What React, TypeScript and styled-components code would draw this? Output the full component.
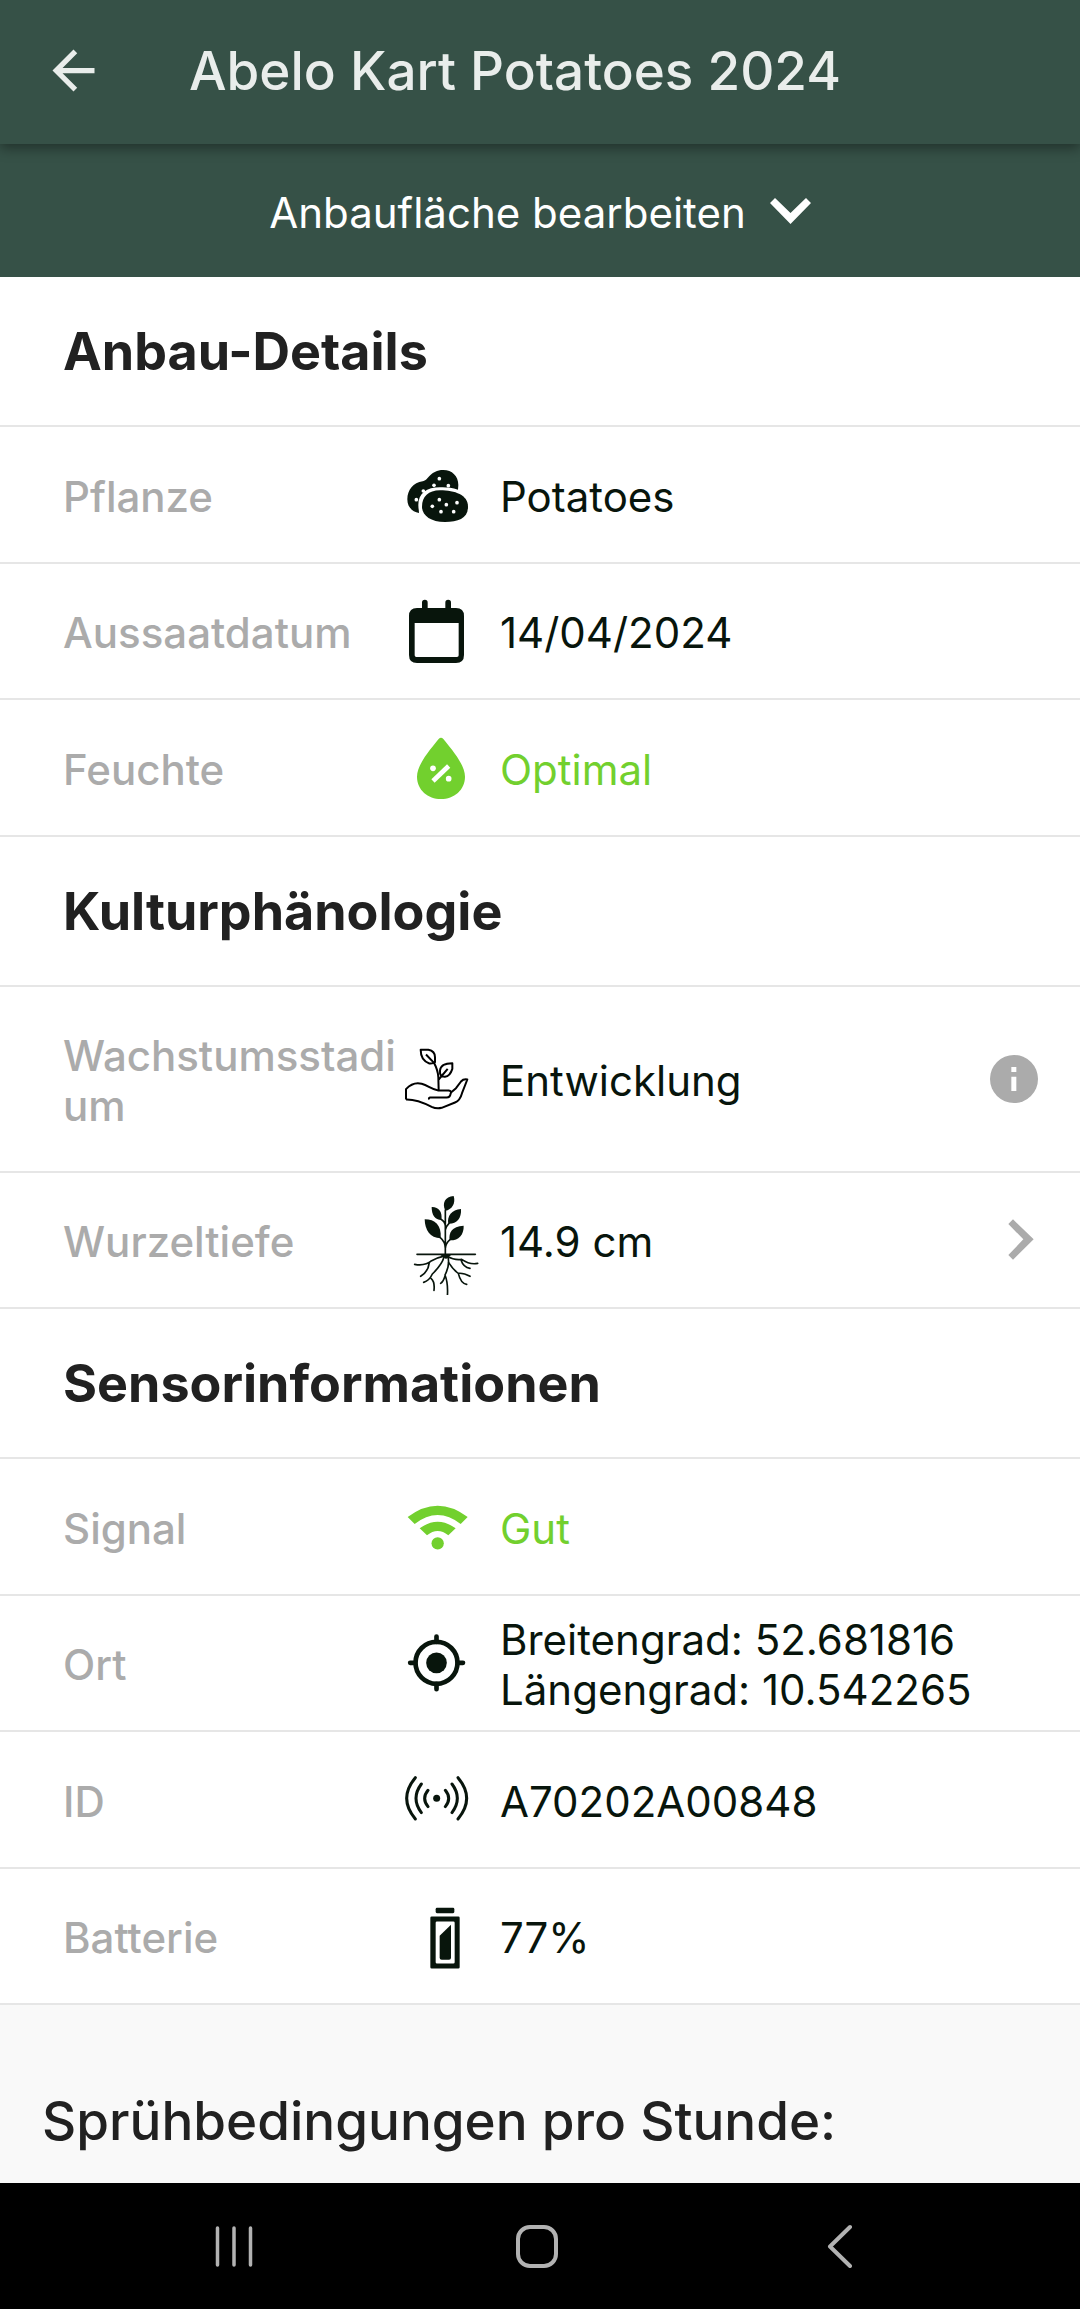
import React from "react";
import styled, { createGlobalStyle } from "styled-components";

const colors = {
  forest: "#365147",
  ink: "#08150c",
  heading: "#212121",
  muted: "#ababab",
  line: "#e6e6e6",
  good: "#72d02e",
};

const GlobalStyle = createGlobalStyle`
  * { box-sizing: border-box; }
  body {
    margin: 0;
    background: #fafafa;
    font-family: Inter, "Liberation Sans", sans-serif;
  }
  button {
    font: inherit;
    color: inherit;
    background: none;
    border: 0;
    padding: 0;
    cursor: pointer;
  }
  svg { display: block; flex: none; }
`;

const Page = styled.div`
  display: flex;
  flex-direction: column;
  min-height: 100vh;
`;

const AppBar = styled.header`
  display: flex;
  align-items: center;
  gap: 84px;
  height: 144px;
  padding: 0 42px 3px;
  background: ${colors.forest};
  color: #e9edeb;
  box-shadow: 0 4px 12px rgba(0, 0, 0, 0.4);
  z-index: 1;
`;

const Title = styled.h1`
  margin: 0;
  font-size: 53px;
  line-height: 64px;
  font-weight: 500;
`;

const EditBar = styled.button`
  && {
    display: flex;
    align-items: center;
    justify-content: center;
    gap: 24px;
    height: 133px;
    padding-top: 4px;
    background: ${colors.forest};
    color: #ffffff;
    font-size: 42px;
    line-height: 50px;
  }
`;

const Details = styled.main`
  background: #ffffff;
`;

const SectionTitle = styled.h2`
  display: flex;
  align-items: center;
  height: 150px;
  margin: 0;
  padding: 2px 63px 0;
  border-bottom: 2px solid ${colors.line};
  color: ${colors.heading};
  font-size: 52px;
  line-height: 64px;
  font-weight: 700;
`;

const List = styled.dl`
  margin: 0;
`;

const Row = styled.div<{ $tall?: boolean }>`
  display: grid;
  grid-template-columns: 339px 98px 1fr auto;
  align-items: center;
  min-height: ${(p) => (p.$tall ? 186 : 137)}px;
  padding: 4px 42px 0 63px;
  border-bottom: 2px solid ${colors.line};
  font-size: 42px;
  line-height: 50px;

  &:nth-child(even) {
    min-height: 136px;
  }
`;

const Label = styled.dt`
  color: ${colors.muted};
  font-weight: 500;
  word-break: break-all;
`;

const Value = styled.dd<{ $good?: boolean }>`
  margin: 0;
  color: ${(p) => (p.$good ? colors.good : colors.ink)};
`;

const Line = styled.span`
  display: block;
`;

const RowAction = styled.button`
  && {
    color: ${colors.muted};
  }
`;

const Spray = styled.section`
  flex: 1;
  padding: 84px 42px 30px;
  background: #f9f9f9;
`;

const SprayTitle = styled.h2`
  margin: 0;
  color: ${colors.heading};
  font-size: 53px;
  line-height: 64px;
  font-weight: 500;
`;

const SystemNav = styled.nav`
  display: grid;
  grid-template-columns: repeat(3, 1fr);
  height: 126px;
  padding: 0 88px 0 82px;
  background: #000000;
  color: #b2b2b2;
`;

const NavButton = styled.button`
  && {
    display: flex;
    align-items: center;
    justify-content: center;
  }
`;

function Glyph({ top, color = colors.ink, children }: { top: number; color?: string; children: React.ReactNode }) {
  return (
    <svg width="78" height="105" viewBox={`66 ${top} 234 315`} fill={color} aria-hidden="true">
      {children}
    </svg>
  );
}

const potatoDots = [
  [178, 116], [162, 136], [205, 137], [130, 153], [109, 179],
  [178, 179], [157, 199], [199, 194], [231, 188], [183, 215], [221, 215],
];

const PotatoIcon = () => (
  <Glyph top={12}>
    <path d="M117 219C95 215 82 200 82 178C82 150 100 128 128 124C146 121 150 90 190 90C216 90 235 108 235 135L234 149C215 143 197 141 180 142C140 142 115 160 115 195C115 205 117 212 117 219Z" />
    <path d="M180 151C225 151 264 165 264 200C264 235 235 246 195 246C150 246 126 225 126 200C126 170 145 151 180 151Z" />
    {potatoDots.map(([x, y]) => (
      <circle key={`${x}-${y}`} cx={x} cy={y} r="5.5" fill="#ffffff" />
    ))}
  </Glyph>
);

const CalendarIcon = () => (
  <Glyph top={423}>
    <path
      fillRule="evenodd"
      d="M126 504V488a8.500 8.500 0 0 1 17 0V504H196V488a8.500 8.500 0 0 1 17 0V504H228Q252 504 252 528V645Q252 669 228 669H111Q87 669 87 645V528Q87 504 111 504ZM104 549V646Q104 651 109 651H231Q236 651 236 646V549Z"
    />
  </Glyph>
);

const MoistureIcon = () => (
  <Glyph top={831} color={colors.good}>
    <path d="M176 897Q183 890 190 897C210 922 255 972 255 1010C255 1050 222 1077 183 1077C144 1077 111 1050 111 1010C111 972 156 922 176 897Z" />
    <path d="M159 1023L206 978" stroke="#ffffff" strokeWidth="14" />
    <circle cx="159" cy="985" r="8.500" fill="#ffffff" />
    <circle cx="206" cy="1016" r="8.500" fill="#ffffff" />
  </Glyph>
);

const HandPlantIcon = () => (
  <Glyph top={25.5} color="none">
    <g stroke="#000000" strokeWidth="6" strokeLinejoin="round">
      <path d="M78 237V206C95 188 110 186 125 190C145 195 155 207 175 210H206Q216 212 212 219Q210 231 200 231H150Q146 232 147 237" />
      <path d="M212 217L228 203L243 183Q250 175 262 177L246 218Q240 240 225 246L185 262Q170 266 155 259Q110 236 78 237" />
      <path d="M176 209L175 170Q174 150 162 127" />
      <path d="M122 88H145Q165 92 165 110V125Q160 130 148 129Q122 120 122 88ZM138 102L160 125" />
      <path d="M217 128V145Q210 167 195 169Q178 170 180 150Q182 128 217 128ZM203 145L176 177" />
    </g>
  </Glyph>
);

const RootIcon = () => (
  <Glyph top={510}>
    <path d="M221 528C228 550 215 570 196 572C185 550 195 530 221 528Z" />
    <path d="M155 561C175 560 188 575 184 600C165 600 155 585 155 561Z" />
    <path d="M243 567C245 595 230 612 205 611C200 590 215 568 243 567Z" />
    <path d="M134 598C165 598 185 615 182 655C150 655 135 630 134 598Z" />
    <path d="M251 617C252 645 235 662 209 661C205 640 215 618 251 617Z" />
    <g fill="none" stroke={colors.ink} strokeWidth="5" strokeLinecap="round">
      <path d="M196 570V706M183 598Q195 605 196 618M207 610Q197 620 196 630M180 652Q196 665 196 685M210 659Q197 670 196 685" />
      <path d="M111 703H286" />
      <path d="M197 707Q175 712 155 722Q135 739 104 733M148 727Q145 755 122 769" />
      <path d="M192 712Q185 735 157 762Q148 782 131 787M153 775Q165 785 162 811" />
      <path d="M204 712Q210 735 195 765Q205 790 202 830M195 768Q190 785 182 790" />
      <path d="M206 728Q220 750 235 760Q242 790 260 793M235 760Q250 758 270 769" />
      <path d="M200 708Q225 722 245 718Q270 735 293 730M243 720Q250 742 270 745" />
      <path d="M188 707H207L198 714Z" fill={colors.ink} />
    </g>
  </Glyph>
);

const WifiIcon = () => (
  <Glyph top={-12} color={colors.good}>
    <path d="M83 111Q173 43 263 111L242 132Q173 78 104 132Z" />
    <path d="M119 145Q173 105 227 145L205 166Q173 140 141 166Z" />
    <circle cx="173" cy="190" r="18.500" />
  </Glyph>
);

const LocationIcon = () => (
  <Glyph top={397.5}>
    <circle cx="169.500" cy="547" r="31" />
    <g fill="none" stroke={colors.ink} strokeWidth="14" strokeLinecap="round">
      <circle cx="169.500" cy="547" r="63" />
      <path d="M169.500 468V484M169.500 610V626M90.500 547H106M233 547H249" />
    </g>
  </Glyph>
);

const SensorIcon = () => (
  <Glyph top={27}>
    <circle cx="170" cy="175" r="10.500" />
    <path
      d="M106 113Q54 175 106 237M124 132Q92 175 124 218M144 151Q124 175 144 200M234 113Q286 175 234 237M216 132Q248 175 216 218M196 151Q216 175 196 200"
      fill="none"
      stroke={colors.ink}
      strokeWidth="9"
      strokeLinecap="round"
    />
  </Glyph>
);

const BatteryIcon = () => (
  <Glyph top={436.5}>
    <rect x="167" y="502" width="56" height="16" rx="4" />
    <path
      fillRule="evenodd"
      d="M155 528H235Q239 528 239 532V680Q239 684 235 684H155Q151 684 151 680V532Q151 528 155 528ZM171 543Q167 543 167 547V665Q167 669 171 669H220Q224 669 224 665V547Q224 543 220 543Z"
    />
    <path d="M213 553V652Q213 658 207 658H185Q179 658 179 652V586Z" />
  </Glyph>
);

const InfoIcon = () => (
  <svg width="48" height="52" viewBox="150 105 144 156" fill="currentColor" aria-hidden="true">
    <circle cx="222" cy="177" r="72" />
    <path d="M214 141H229V156H214ZM214 170H229V213H214Z" fill="#ffffff" />
  </svg>
);

const ChevronRightIcon = () => (
  <svg width="48" height="52" viewBox="150 588 144 156" fill="currentColor" aria-hidden="true">
    <path d="M205 612L219 598L281 658L219 719L205 705L250 658Z" />
  </svg>
);

type Item = {
  label: string;
  icon: React.ReactNode;
  lines: string[];
  good?: boolean;
  tall?: boolean;
  action?: { name: string; icon: React.ReactNode };
};

const sections: { title: string; items: Item[] }[] = [
  {
    title: "Anbau-Details",
    items: [
      { label: "Pflanze", icon: <PotatoIcon />, lines: ["Potatoes"] },
      { label: "Aussaatdatum", icon: <CalendarIcon />, lines: ["14/04/2024"] },
      { label: "Feuchte", icon: <MoistureIcon />, lines: ["Optimal"], good: true },
    ],
  },
  {
    title: "Kulturphänologie",
    items: [
      {
        label: "Wachstumsstadium",
        icon: <HandPlantIcon />,
        lines: ["Entwicklung"],
        tall: true,
        action: { name: "Info", icon: <InfoIcon /> },
      },
      {
        label: "Wurzeltiefe",
        icon: <RootIcon />,
        lines: ["14.9 cm"],
        action: { name: "Wurzeltiefe öffnen", icon: <ChevronRightIcon /> },
      },
    ],
  },
  {
    title: "Sensorinformationen",
    items: [
      { label: "Signal", icon: <WifiIcon />, lines: ["Gut"], good: true },
      {
        label: "Ort",
        icon: <LocationIcon />,
        lines: ["Breitengrad: 52.681816", "Längengrad: 10.542265"],
      },
      { label: "ID", icon: <SensorIcon />, lines: ["A70202A00848"] },
      { label: "Batterie", icon: <BatteryIcon />, lines: ["77%"] },
    ],
  },
];

export default function App() {
  return (
    <Page>
      <GlobalStyle />
      <AppBar>
        <button type="button" aria-label="Zurück">
          <svg width="63" height="63" viewBox="0 0 24 24" fill="currentColor" aria-hidden="true">
            <path d="M20 11H7.830l5.590-5.590L12 4l-8 8 8 8 1.410-1.410L7.830 13H20v-2z" />
          </svg>
        </button>
        <Title>Abelo Kart Potatoes 2024</Title>
      </AppBar>
      <EditBar type="button">
        Anbaufläche bearbeiten
        <svg width="41" height="30" viewBox="0 0 41 30" fill="currentColor" aria-hidden="true">
          <path d="M0 5L5 0L20.500 15L36 0L41 5L20.500 26Z" />
        </svg>
      </EditBar>
      <Details>
        {sections.map((section) => (
          <section key={section.title}>
            <SectionTitle>{section.title}</SectionTitle>
            <List>
              {section.items.map((item) => (
                <Row key={item.label} $tall={item.tall}>
                  <Label>{item.label}</Label>
                  {item.icon}
                  <Value $good={item.good}>
                    {item.lines.map((line) => (
                      <Line key={line}>{line}</Line>
                    ))}
                  </Value>
                  {item.action && (
                    <RowAction type="button" aria-label={item.action.name}>
                      {item.action.icon}
                    </RowAction>
                  )}
                </Row>
              ))}
            </List>
          </section>
        ))}
      </Details>
      <Spray>
        <SprayTitle>Sprühbedingungen pro Stunde:</SprayTitle>
      </Spray>
      <SystemNav aria-label="System">
        <NavButton type="button" aria-label="Letzte Apps">
          <svg width="44" height="44" viewBox="0 0 44 44" stroke="currentColor" strokeWidth="3.500" strokeLinecap="round">
            <path d="M5.500 4V41M22 4V41M38.500 4V41" />
          </svg>
        </NavButton>
        <NavButton type="button" aria-label="Startseite">
          <svg width="44" height="44" viewBox="0 0 44 44" fill="none" stroke="currentColor" strokeWidth="4">
            <rect x="3" y="3" width="38" height="39" rx="12" />
          </svg>
        </NavButton>
        <NavButton type="button" aria-label="Zurück">
          <svg width="44" height="44" viewBox="0 0 44 44" fill="none" stroke="currentColor" strokeWidth="4" strokeLinecap="round" strokeLinejoin="round">
            <path d="M32 3L12 22.500L32 42" />
          </svg>
        </NavButton>
      </SystemNav>
    </Page>
  );
}
